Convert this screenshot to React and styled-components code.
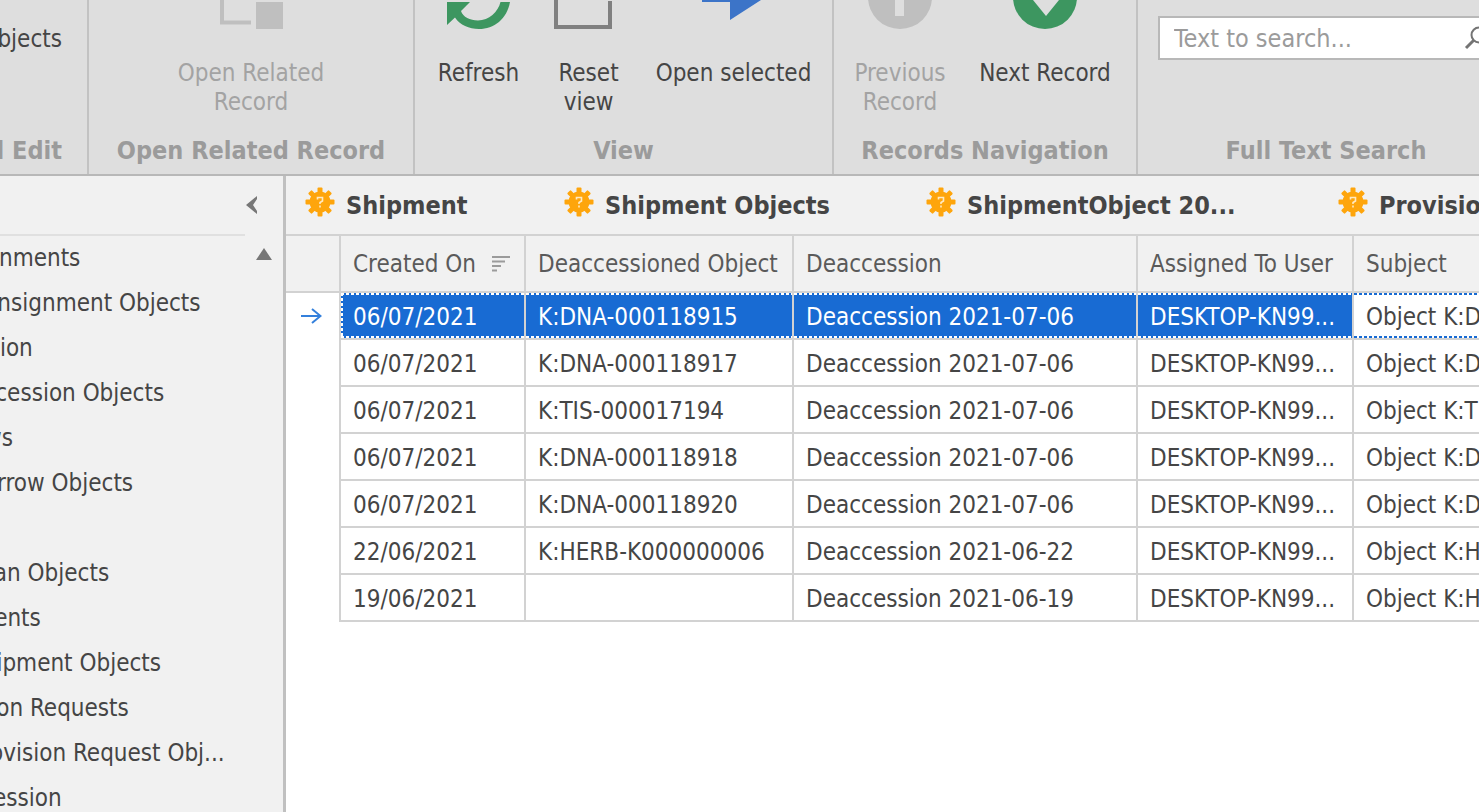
import React from 'react';
import styled, { createGlobalStyle } from 'styled-components';

const Global = createGlobalStyle`
  * { box-sizing: border-box; }
  body { margin: 0; background: #fff; font-family: "DejaVu Sans Condensed", "DejaVu Sans", sans-serif; font-size: 24px; color: #454545; overflow: hidden; }
  button, input { font: inherit; color: inherit; }
`;

const Window = styled.div`
  display: flex;
  flex-direction: column;
  height: 100vh;
  overflow: hidden;
`;

const Ribbon = styled.header`
  display: flex;
  background: #dedede;
  border-bottom: 2px solid #b8b8b8;
  height: 176px;
  flex: none;
`;

const Group = styled.section`
  display: flex;
  flex-direction: column;
  justify-content: space-between;
  align-items: ${p => (p.$end ? 'flex-end' : 'stretch')};
  flex: ${p => (p.$grow ? '1 0' : '0 0')} ${p => p.$width}px;
  min-width: 0;
  padding: 0 ${p => (p.$end ? 25 : 0)}px 7px 0;
  border-right: 2px solid #c2c2c2;
`;

const Caption = styled.h2`
  margin: 0;
  text-align: center;
  white-space: nowrap;
  font-size: 25px;
  line-height: 32px;
  font-weight: bold;
  color: #9b9b9b;
`;

const Commands = styled.div`
  display: flex;
  justify-content: center;
  gap: ${p => p.$gap || 0}px;
`;

const Command = styled.button`
  display: flex;
  flex-direction: column;
  align-items: center;
  gap: 29px;
  width: ${p => p.$width}px;
  padding: 0;
  border: 0;
  background: none;
  line-height: 29px;
  &:disabled { color: #a3a3a3; }
  svg { display: block; }
`;

const SmallCommand = styled.button`
  padding: 0;
  margin-top: 25px;
  border: 0;
  background: none;
  line-height: 29px;
`;

const SearchBox = styled.label`
  display: flex;
  align-items: center;
  gap: 8px;
  margin: 16px 20px 0;
  height: 44px;
  padding: 0 4px 0 14px;
  background: #fff;
  border: 2px solid #b8b8b8;
`;

const SearchInput = styled.input`
  flex: 1;
  min-width: 0;
  padding: 0;
  border: 0;
  outline: 0;
  background: none;
  font-size: 25px;
  &::placeholder { color: #9b9b9b; opacity: 1; }
`;

const Body = styled.div`
  display: flex;
  flex: 1;
  min-height: 0;
`;

const Sidebar = styled.nav`
  flex: 0 0 286px;
  background: #f1f1f1;
  border-right: 3px solid #c0c0c0;
  overflow: hidden;
`;

const SidebarHead = styled.div`
  display: flex;
  justify-content: flex-end;
  align-items: center;
  height: 58px;
  padding-right: 25px;
`;

const Divider = styled.hr`
  margin: 0 38px 0 0;
  border: 0;
  border-top: 2px solid #e0e0e0;
`;

const IconButton = styled.button`
  display: flex;
  padding: 0;
  border: 0;
  background: none;
`;

const SidebarBody = styled.div`
  display: flex;
  justify-content: space-between;
  align-items: flex-start;
  padding-right: 11px;
`;

const ScrollButton = styled(IconButton)`
  padding-top: 12px;
`;

const NavList = styled.ul`
  margin: 0 0 0 -74px;
  padding: 0;
  list-style: none;
`;

const NavItem = styled.li`
  height: 45px;
  line-height: 44px;
  padding-left: ${p => (p.$child ? 43 : 0)}px;
  white-space: nowrap;
`;

const NavLink = styled.a`
  color: inherit;
  text-decoration: none;
`;

const Main = styled.main`
  flex: 1;
  min-width: 0;
  overflow: hidden;
`;

const Tabs = styled.div`
  display: flex;
  height: 58px;
  padding-left: 19px;
  background: #f1f1f1;
  overflow: hidden;
`;

const Tab = styled.button`
  display: flex;
  align-items: center;
  gap: 11px;
  flex: 0 0 ${p => p.$width}px;
  padding: 0;
  border: 0;
  background: none;
  font-size: 25px;
  font-weight: bold;
  white-space: nowrap;
  svg { flex: none; margin-bottom: 6px; }
`;

const Table = styled.table`
  width: 100%;
  table-layout: fixed;
  border-collapse: separate;
  border-spacing: 0;
`;

const Col = styled.col`
  width: ${p => p.$width}px;
`;

const HeadCell = styled.th`
  height: 59px;
  padding: 0 0 0 12px;
  border: solid #d2d2d2;
  border-width: 2px 2px 2px 0;
  background: #f1f1f1;
  text-align: left;
  font-weight: normal;
  white-space: nowrap;
  overflow: hidden;
  color: #5a5a5a;
  &:last-child { border-right: 0; }
`;

const HeadLabel = styled.span`
  display: flex;
  align-items: center;
  gap: 16px;
`;

const RowMark = styled.td`
  padding: 0 0 0 15px;
  border-right: 2px solid #d2d2d2;
  svg { display: block; }
`;

const dots = (angle, color) => `repeating-linear-gradient(${angle}, ${color} 0 3px, transparent 3px 5px)`;

const Cell = styled.td`
  height: 47px;
  padding: 2px 0 0 12px;
  border: solid #d2d2d2;
  border-width: 0 2px 2px 0;
  white-space: nowrap;
  overflow: hidden;
  background-color: ${p => (p.$selected ? '#186bd3' : '#fff')};
  color: ${p => (p.$selected ? '#fff' : 'inherit')};
  &:last-child { border-right: 0; }
  ${p => p.$focused && `
    background-image:
      ${dots('90deg', p.$selected ? '#fff' : '#186bd3')},
      ${dots('90deg', p.$selected ? '#fff' : '#186bd3')},
      ${dots('180deg', p.$first ? '#fff' : 'transparent')};
    background-size: 100% 2px, 100% 2px, 2px 100%;
    background-position: left top, left bottom, left top;
    background-repeat: no-repeat;
    background-clip: padding-box;
    background-origin: padding-box;
  `}
`;

const Gear = () => (
  <svg width="30" height="30" viewBox="-15 -15 30 30" aria-hidden="true">
    <circle r="10.500" fill="#fea50c" />
    {[0, 45, 90, 135].map(a => (
      <rect key={a} x="-2.500" y="-14.500" width="5" height="29" rx="1" fill="#fea50c" transform={`rotate(${a})`} />
    ))}
    <path d="M-2.500 -2.500V-4.500H2.500V-1L0 0.500V2M0 3.500V5.500" fill="none" stroke="#ffe9c2" strokeWidth="1.600" />
  </svg>
);

const RelatedIcon = () => (
  <svg width="68" height="30" viewBox="0 0 68 30" aria-hidden="true">
    <path d="M5 0V22.500H34" fill="none" stroke="#bfbfbf" strokeWidth="4" />
    <rect x="39" y="2" width="27" height="27" fill="#bfbfbf" />
  </svg>
);

const RefreshIcon = () => (
  <svg width="66" height="30" viewBox="0 0 66 30" aria-hidden="true">
    <path d="M1 2H24L15 11C17 17 24 20.500 32 20.500C43 20.500 52 12 54.500 2H64C61 19 48 29 33 29C23 29 14 25 9 17.500L1 25Z" fill="#3d9660" />
  </svg>
);

const ResetIcon = () => (
  <svg width="74" height="30" viewBox="0 0 74 30" aria-hidden="true">
    <path d="M4 0V27H58V1" fill="none" stroke="#808080" strokeWidth="4" />
  </svg>
);

const OpenIcon = () => (
  <svg width="64" height="30" viewBox="0 0 64 30" aria-hidden="true">
    <path d="M0 0H59L28 20V2H0Z" fill="#3c74c8" />
  </svg>
);

const PreviousIcon = () => (
  <svg width="64" height="30" viewBox="0 0 64 30" aria-hidden="true">
    <circle cx="32" cy="-3" r="32" fill="#bfbfbf" />
    <rect x="27" y="0" width="9" height="16" fill="#dedede" />
  </svg>
);

const NextIcon = () => (
  <svg width="64" height="30" viewBox="0 0 64 30" aria-hidden="true">
    <circle cx="32" cy="-3" r="32" fill="#3d9660" />
    <path d="M20 0H46L33 16Z" fill="#dedede" />
  </svg>
);

const SearchIcon = () => (
  <svg width="24" height="24" viewBox="0 0 24 24" aria-hidden="true">
    <circle cx="15" cy="9" r="7.500" fill="none" stroke="#747474" strokeWidth="2" />
    <path d="M10 14L2 22" stroke="#747474" strokeWidth="3" />
  </svg>
);

const SortIcon = () => (
  <svg width="18" height="16" viewBox="0 0 18 16" aria-hidden="true">
    <path d="M0 1H18M0 5.500H13M0 10H9M0 14.500H5" stroke="#9b9b9b" strokeWidth="2" />
  </svg>
);

const ArrowIcon = () => (
  <svg width="21" height="18" viewBox="0 0 21 18" aria-hidden="true">
    <path d="M0 8H19M11 1L19.500 8L11 15" fill="none" stroke="#3480dc" strokeWidth="2" />
  </svg>
);

const navItems = [
  { label: 'Consignments' },
  { label: 'Consignment Objects', child: true },
  { label: 'Accession' },
  { label: 'Accession Objects', child: true },
  { label: 'Borrows' },
  { label: 'Borrow Objects', child: true },
  { label: '' },
  { label: 'Loan Objects', child: true },
  { label: 'Shipments' },
  { label: 'Shipment Objects', child: true },
  { label: 'Provision Requests' },
  { label: 'Provision Request Obj...', child: true },
  { label: 'Deaccession' },
];

const tabs = [
  { label: 'Shipment', width: 259 },
  { label: 'Shipment Objects', width: 362 },
  { label: 'ShipmentObject 20...', width: 412 },
  { label: 'Provisio', width: 259 },
];

const rows = [
  ['06/07/2021', 'K:DNA-000118915', 'Deaccession 2021-07-06', 'DESKTOP-KN99...', 'Object K:D'],
  ['06/07/2021', 'K:DNA-000118917', 'Deaccession 2021-07-06', 'DESKTOP-KN99...', 'Object K:D'],
  ['06/07/2021', 'K:TIS-000017194', 'Deaccession 2021-07-06', 'DESKTOP-KN99...', 'Object K:T'],
  ['06/07/2021', 'K:DNA-000118918', 'Deaccession 2021-07-06', 'DESKTOP-KN99...', 'Object K:D'],
  ['06/07/2021', 'K:DNA-000118920', 'Deaccession 2021-07-06', 'DESKTOP-KN99...', 'Object K:D'],
  ['22/06/2021', 'K:HERB-K000000006', 'Deaccession 2021-06-22', 'DESKTOP-KN99...', 'Object K:H'],
  ['19/06/2021', '', 'Deaccession 2021-06-19', 'DESKTOP-KN99...', 'Object K:H'],
];

export default function App() {
  return (
    <Window>
      <Global />
      <Ribbon>
        <Group $width={89} $end>
          <SmallCommand>bjects</SmallCommand>
          <Caption>l Edit</Caption>
        </Group>
        <Group $width={326}>
          <Commands>
            <Command $width={170} disabled><RelatedIcon />Open Related Record</Command>
          </Commands>
          <Caption>Open Related Record</Caption>
        </Group>
        <Group $width={419}>
          <Commands $gap={20}>
            <Command $width={100}><RefreshIcon />Refresh</Command>
            <Command $width={80}><ResetIcon />Reset view</Command>
            <Command $width={170}><OpenIcon />Open selected</Command>
          </Commands>
          <Caption>View</Caption>
        </Group>
        <Group $width={304}>
          <Commands $gap={20}>
            <Command $width={100} disabled><PreviousIcon />Previous Record</Command>
            <Command $width={150}><NextIcon />Next Record</Command>
          </Commands>
          <Caption>Records Navigation</Caption>
        </Group>
        <Group $width={378} $grow>
          <SearchBox>
            <SearchInput placeholder="Text to search..." aria-label="Text to search" />
            <SearchIcon />
          </SearchBox>
          <Caption>Full Text Search</Caption>
        </Group>
      </Ribbon>
      <Body>
        <Sidebar>
          <SidebarHead>
            <IconButton aria-label="Collapse">
              <svg width="12" height="18" viewBox="0 0 12 18"><path d="M11 0L0 9L11 18V15L7 9L11 3Z" fill="#777" /></svg>
            </IconButton>
          </SidebarHead>
          <Divider />
          <SidebarBody>
            <NavList>
              {navItems.map((item, i) => (
                <NavItem key={i} $child={item.child}>
                  {item.label && <NavLink href="#">{item.label}</NavLink>}
                </NavItem>
              ))}
            </NavList>
            <ScrollButton aria-label="Scroll up">
              <svg width="16" height="12" viewBox="0 0 16 12"><path d="M8 0L16 12H0Z" fill="#777" /></svg>
            </ScrollButton>
          </SidebarBody>
        </Sidebar>
        <Main>
          <Tabs>
            {tabs.map(t => <Tab key={t.label} $width={t.width}><Gear />{t.label}</Tab>)}
          </Tabs>
          <Table>
            <colgroup>
              <Col $width={55} /><Col $width={185} /><Col $width={268} /><Col $width={344} /><Col $width={216} /><col />
            </colgroup>
            <thead>
              <tr>
                <HeadCell aria-label="Current row" />
                <HeadCell><HeadLabel>Created On<SortIcon /></HeadLabel></HeadCell>
                <HeadCell>Deaccessioned Object</HeadCell>
                <HeadCell>Deaccession</HeadCell>
                <HeadCell>Assigned To User</HeadCell>
                <HeadCell>Subject</HeadCell>
              </tr>
            </thead>
            <tbody>
              {rows.map((r, i) => (
                <tr key={i}>
                  <RowMark>{i === 0 && <ArrowIcon />}</RowMark>
                  {r.map((c, j) => (
                    <Cell key={j} $focused={i === 0} $first={j === 0} $selected={i === 0 && j < 4}>{c}</Cell>
                  ))}
                </tr>
              ))}
            </tbody>
          </Table>
        </Main>
      </Body>
    </Window>
  );
}
